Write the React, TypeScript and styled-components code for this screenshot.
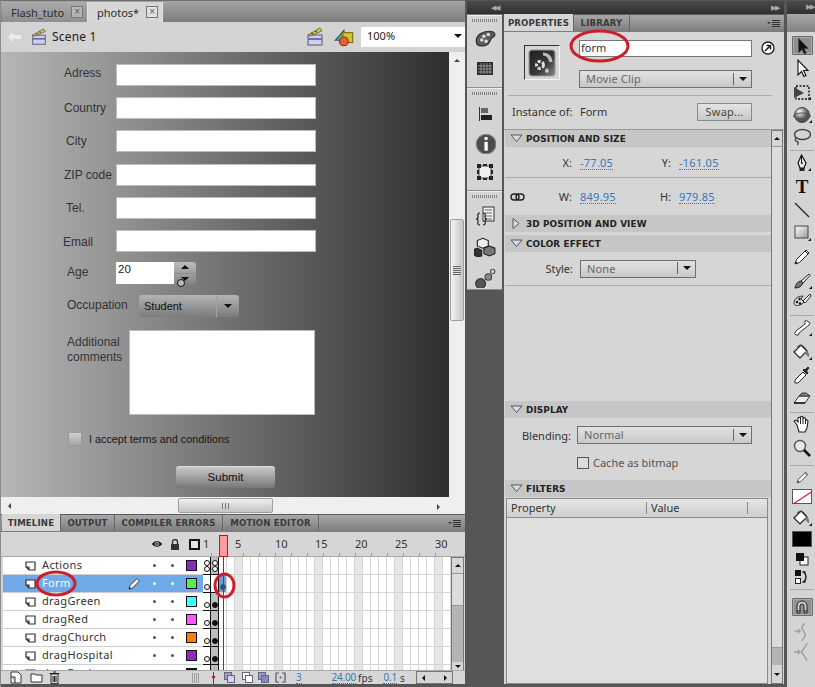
import React from "react";
import styled, { createGlobalStyle } from "styled-components";

const Global = createGlobalStyle`
  html, body { margin: 0; padding: 0; background: #565656; overflow: hidden; }
  * { box-sizing: border-box; }
  svg { display: block; }
`;
const ui = `"Noto Sans", "DejaVu Sans", sans-serif`;
const head = `"DejaVu Sans", sans-serif`;
const arial = `"Liberation Sans", Arial, sans-serif`;

const Screen = styled.div`
  position: relative; width: 815px; height: 687px; display: flex; background: #565656;
  font-family: ${ui}; font-size: 11px; color: #333; overflow: hidden;
`;
const LeftColumn = styled.div`
  width: 465px; height: 687px; display: flex; flex-direction: column;
  border-left: 1px solid #8c8c8c; border-top: 1px solid #6e6e6e; flex: none;
`;
const DocTabs = styled.div`
  height: 21px; display: flex; align-items: flex-end; padding-left: 1px;
  background: linear-gradient(#a4a4a4, #7d7d7d); flex: none;
`;
const DocTab = styled.div<{ $active?: boolean; $w: number }>`
  width: ${(p) => p.$w}px; height: 20px; display: flex; align-items: center; gap: 7px; padding-left: 9px;
  font-size: 11px; color: #2e2e2e;
  background: ${(p) => (p.$active ? "#d6d6d6" : "linear-gradient(#aaa,#909090)")};
  border-right: 1px solid #e4e4e4;
`;
const CloseBox = styled.span`
  width: 12px; height: 12px; border: 1px solid #777; color: #555; font-size: 10px; line-height: 9px; text-align: center;
  background: rgba(255,255,255,.25); font-family: ${arial};
`;
const SceneBar = styled.div`
  height: 30px; flex: none; display: flex; align-items: center; background: #d3d3d3; padding: 0 0 0 7px;
`;
const SceneName = styled.span` margin-left: 4px; padding-bottom: 2px; font-size: 12px; letter-spacing: .2px; color: #222; flex: 1; `;
const ZoomBox = styled.div`
  width: 104px; height: 20px; background: #fff; margin-left: 5px; display: flex; align-items: center; justify-content: space-between;
  padding: 0 3px 3px 6px; font-size: 11px; color: #222;
`;
const StageRow = styled.div` height: 445px; flex: none; display: flex; `;
const Stage = styled.div`
  width: 448px; height: 445px; flex: none; padding-top: 12px; overflow: hidden;
  background: linear-gradient(90deg, #b6b6b6 0%, #2e2e2e 100%);
  font-family: ${arial}; font-size: 12px; color: #333;
`;
const FormRow = styled.div<{ $mt?: number }>` display: flex; height: 22px; margin-top: ${(p) => p.$mt ?? 11}px; `;
const FormLabel = styled.div<{ $x: number; $w?: number; $lift?: number }>`
  width: ${(p) => p.$w ?? 115}px; flex: none; padding-left: ${(p) => p.$x}px; line-height: 22px; color: #333;
  margin-top: ${(p) => -(p.$lift ?? 0)}px;
`;
const TextBox = styled.div<{ $w?: number; $h?: number }>`
  width: ${(p) => p.$w ?? 200}px; height: ${(p) => p.$h ?? 22}px; background: #fff; border: 1px solid #bdbdbd; flex: none;
`;
const AgeBox = styled.div`
  width: 58px; height: 22px; background: #fff; color: #222; padding: 0 0 0 2px; line-height: 15px; font-size: 11.5px;
`;
const Spinner = styled.div`
  width: 22px; height: 22px; border-radius: 0 3px 3px 0; display: flex; flex-direction: column;
  background: linear-gradient(#bcbcbc, #858585); position: relative;
`;
const SpinPart = styled.div<{ $down?: boolean }>`
  flex: 1; display: flex; align-items: center; justify-content: center; font-size: 0;
  border-bottom: ${(p) => (p.$down ? "none" : "1px solid #8f8f8f")};
`;
const Tri = styled.span<{ $dir: "up" | "down" | "left" | "right"; $s?: number; $c?: string }>`
  display: inline-block; width: 0; height: 0; flex: none;
  ${(p) => {
    const s = p.$s ?? 4; const c = p.$c ?? "#111";
    if (p.$dir === "up") return `border-left:${s}px solid transparent;border-right:${s}px solid transparent;border-bottom:${s}px solid ${c};`;
    if (p.$dir === "down") return `border-left:${s}px solid transparent;border-right:${s}px solid transparent;border-top:${s}px solid ${c};`;
    if (p.$dir === "left") return `border-top:${s}px solid transparent;border-bottom:${s}px solid transparent;border-right:${s}px solid ${c};`;
    return `border-top:${s}px solid transparent;border-bottom:${s}px solid transparent;border-left:${s}px solid ${c};`;
  }}
`;
const CursorMark = styled.span`
  position: absolute; left: 3px; top: 17px; width: 8px; height: 8px; border-radius: 50%; background: #bbb; border: 1.5px solid #111;
`;
const OccSelect = styled.div`
  width: 100px; height: 22px; border-radius: 3px; display: flex; align-items: center; font-size: 11px; color: #111;
  background: linear-gradient(#b4b4b4, #7b7b7b); padding-left: 5px; position: relative;
`;
const OccName = styled.span` flex: 1; `;
const OccArrow = styled.span`
  width: 23px; height: 22px; border-left: 1px solid #a2a2a2; display: flex; align-items: center; justify-content: center;
`;
const CommentLabel = styled.div` width: 128px; padding-left: 66px; flex: none; line-height: 15px; padding-top: 5px; color: #333; `;
const CommentRow = styled.div` display: flex; margin-top: 13px; height: 85px; `;
const CheckRow = styled.div` display: flex; align-items: center; gap: 7px; margin: 17px 0 0 67px; height: 14px; color: #151515; font-size: 10.8px; `;
const FormCheck = styled.span` width: 14px; height: 14px; background: linear-gradient(#d0d0d0, #a5a5a5); border: 1px solid #999; `;
const SubmitBtn = styled.div`
  width: 99px; height: 22px; margin: 20px 0 0 175px; border-radius: 3px; background: linear-gradient(#c8c8c8, #777);
  text-align: center; line-height: 21px; font-size: 11.5px; color: #111; border-top: 1px solid #ddd;
`;
const VScroll = styled.div`
  width: 16px; flex: none; background: #efefef; display: flex; flex-direction: column; align-items: center; padding-top: 7px;
`;
const VThumb = styled.div`
  width: 14px; height: 102px; margin-top: 157px; border: 1px solid #9e9e9e; border-radius: 2px;
  background: linear-gradient(90deg, #f2f2f2, #e2e2e2 40%, #c4c4c8); display: flex; align-items: center; justify-content: center;
`;
const GripH = styled.span`
  width: 8px; height: 9px; background: repeating-linear-gradient(#666 0 1px, #ddd 1px 2px);
`;
const GripV = styled.span`
  width: 7px; height: 6px; background: repeating-linear-gradient(90deg, #777 0 1px, transparent 1px 3px);
`;
const GripTall = styled.span`
  display: block; width: 7px; height: 10px; background: repeating-linear-gradient(90deg, #a0a0a0 0 1px, transparent 1px 2px);
`;
const HScroll = styled.div`
  height: 17px; flex: none; background: #efefef; display: flex; align-items: center; padding-left: 7px; position: relative;
`;
const HThumb = styled.div`
  width: 95px; height: 15px; margin-left: 167px; border: 1px solid #9e9e9e; border-radius: 2px;
  background: linear-gradient(#f0f0f0, #c4c4c4); display: flex; align-items: center; justify-content: center;
`;
const HEnd = styled.span` margin-left: 164px; `;
const PanelTabs = styled.div`
  height: 18px; flex: none; display: flex; align-items: flex-end; background: linear-gradient(#a8a8a8, #7e7e7e);
  border-top: 1px solid #5a5a5a; border-bottom: 1px solid #7d7d7d;
`;
const PanelTab = styled.div<{ $active?: boolean; $w: number }>`
  width: ${(p) => p.$w}px; height: 17px; flex: none; text-align: center; line-height: 18px;
  font-family: ${head}; font-weight: 700; font-size: 8.6px; letter-spacing: .15px; color: #3a3a3a;
  background: ${(p) => (p.$active ? "#d6d6d6" : "transparent")}; border-right: 1px solid #666;
`;
const TabSpacer = styled.div` flex: 1; `;
const MenuGlyph = styled.div`
  width: 14px; height: 16px; margin-right: 3px; display: flex; align-items: center; gap: 1px;
`;
const MenuLines = styled.span`
  width: 8px; height: 7px; background: repeating-linear-gradient(#333 0 1px, transparent 1px 2px);
`;
const TimelineBody = styled.div`
  position: relative; flex: none; height: 152px; background: #d6d6d6;
`;
const RulerRow = styled.div` height: 25px; display: flex; padding-left: 2px; border-bottom: 1px solid #a8a8a8; `;
const LayerHeads = styled.div`
  width: 200px; flex: none; position: relative; display: flex; align-items: center; padding-left: 145px;
`;
const HeadCell = styled.div` width: 18px; display: flex; justify-content: center; `;
const OutlineBox = styled.span` width: 11px; height: 11px; border: 2px solid #111; margin-left: 5px; background: #e4e4e4; `;
const Ruler = styled.div` display: flex; width: 248px; `;
const RulerCell = styled.div<{ $tick: boolean }>`
  width: 8px; height: 24px; position: relative; font-size: 11px; color: #333;
  ${(p) => (p.$tick ? "background: linear-gradient(#999,#999) 0 100% / 1px 3px no-repeat;" : "")}
`;
const RulerLabel = styled.span` position: absolute; left: 0; top: 4px; white-space: nowrap; `;
const RowsArea = styled.div` display: flex; height: 113px; padding-left: 2px; overflow: hidden; `;
const LayerCol = styled.div` width: 200px; flex: none; `;
const LayerRow = styled.div<{ $sel?: boolean }>`
  height: 18px; display: flex; align-items: center; padding-left: 22px; overflow: hidden;
  background: ${(p) => (p.$sel ? "#70a9e8" : "#fff")}; border-bottom: 1px solid #cfcfcf;
  color: ${(p) => (p.$sel ? "#fff" : "#333")}; letter-spacing: .35px;
`;
const LayerName = styled.span` width: 85px; margin-left: 6px; flex: none; padding-bottom: 3px; white-space: nowrap; `;
const PencilSlot = styled.span` width: 18px; flex: none; `;
const DotCell = styled.span` width: 18px; flex: none; display: flex; justify-content: center; `;
const Dot = styled.i<{ $light?: boolean }>` width: 3px; height: 3px; border-radius: 50%; background: ${(p) => (p.$light ? "#fff" : "#555")}; `;
const Swatch = styled.span<{ $c: string }>` width: 11px; height: 11px; flex: none; margin-left: 5px; background: ${(p) => p.$c}; border: 1px solid #111; `;
const FrameCol = styled.div` width: 248px; flex: none; `;
const FrameLine = styled.div` display: flex; height: 18px; `;
const Frame = styled.div<{ $bg: string; $edge?: boolean }>`
  width: 8px; height: 18px; position: relative; flex: none; background: ${(p) => p.$bg};
  border-right: 1px solid ${(p) => (p.$edge ? "#111" : "#d4d4d4")};
  border-bottom: 1px solid ${(p) => (p.$edge ? "#111" : "#d4d4d4")};
`;
const KeyMark = styled.i<{ $solid?: boolean; $b?: number; $c?: string }>`
  position: absolute; left: 1px; bottom: ${(p) => p.$b ?? 2}px; width: 6px; height: 6px; border-radius: 50%;
  background: ${(p) => (p.$c ?? (p.$solid ? "#111" : "#fff"))}; border: 1px solid ${(p) => p.$c ?? "#111"};
`;
const TimeScroll = styled.div`
  width: 13px; flex: none; display: flex; flex-direction: column; background: #b4b4b4; border: 1px solid #777; border-bottom: none;
`;
const ScrollArrow = styled.div<{ $h: number }>` height: ${(p) => p.$h}px; display: flex; align-items: center; justify-content: center; flex: none; background: #d6d6d6; `;
const ScrollThumb = styled.div<{ $h: number }>` height: ${(p) => p.$h}px; flex: none; background: #dcdcdc; border-top: 1px solid #999; border-bottom: 1px solid #999; `;
const ScrollFill = styled.div` flex: 1; `;
const Playhead = styled.div`
  position: absolute; left: 218px; top: 3px; width: 9px; height: 22px; background: #ff9c9c; border: 1px solid #c01818;
`;
const PlayLine = styled.div` position: absolute; left: 222px; top: 25px; width: 1px; height: 113px; background: #c01818; `;
const TimeFooter = styled.div`
  height: 14px; display: flex; align-items: center; padding-left: 9px; background: #d6d6d6; font-size: 10px; border-top: 1px solid #a8a8a8;
`;
const FootIcon = styled.span<{ $ml: number }>` margin-left: ${(p) => p.$ml}px; flex: none; `;
const BlueVal = styled.span<{ $ml?: number }>`
  color: #3a76b8; border-bottom: 1px dotted #3a76b8; line-height: 11px; margin-left: ${(p) => p.$ml ?? 0}px; letter-spacing: -.2px;
`;
const FootText = styled.span<{ $ml: number }>` margin-left: ${(p) => p.$ml}px; color: #333; `;
const FootPager = styled.div`
  width: 37px; height: 13px; margin-left: 11px; border: 1px solid #777; display: flex; align-items: center; justify-content: space-between; padding: 0 5px; flex: none;
`;
const Gutter = styled.div` width: 2px; flex: none; `;
const RightArea = styled.div` width: 317px; flex: none; display: flex; flex-direction: column; `;
const CollapseStrip = styled.div`
  height: 13px; margin-top: 1px; flex: none; display: flex; align-items: center; justify-content: space-between; padding: 0 5px 0 24px;
  background: linear-gradient(#4a4a4a, #303030); color: #aaa; font-size: 7px; letter-spacing: -1px; font-family: ${arial};
`;
const RightBody = styled.div` flex: 1; display: flex; `;
const Dock = styled.div` width: 35px; flex: none; height: 276px; background: #d4d4d4; display: flex; flex-direction: column; border-top: 1px solid #777; `;
const DockGroup = styled.div<{ $h: number; $gap: number }>`
  height: ${(p) => p.$h}px; border-bottom: 1px solid #8e8e8e; border-top: 1px solid #eee; flex: none; display: flex; flex-direction: column; align-items: center; gap: ${(p) => p.$gap}px; padding-top: 3px;
`;
const DockGrip = styled.span<{ $mb: number }>`
  width: 26px; height: 3px; background: repeating-linear-gradient(90deg, #888 0 1px, transparent 1px 2px); margin-bottom: ${(p) => p.$mb}px;
`;
const Props = styled.div`
  width: 280px; flex: none; margin-left: 2px; display: flex; flex-direction: column; background: #d6d6d6; height: 670px; font-size: 11px;
`;
const PropHeader = styled.div` height: 97px; flex: none; `;
const SymbolRow = styled.div` display: flex; padding: 8px 0 0 20px; height: 63px; `;
const SymbolBox = styled.div`
  width: 36px; height: 35px; flex: none; display: flex; align-items: center; justify-content: center; margin-top: 5px;
  border-left: 1px solid #333; border-top: 1px solid #333; border-right: 1px solid #f4f4f4; border-bottom: 1px solid #f4f4f4;
`;
const SymbolStack = styled.div` width: 173px; margin-left: 19px; display: flex; flex-direction: column; gap: 13px; `;
const NameInput = styled.div` height: 17px; background: #fff; border: 1px solid #777; padding-left: 1px; line-height: 14px; color: #333; font-size: 11px; `;
const Dropdown = styled.div<{ $w?: number }>`
  ${(p) => (p.$w ? `width:${p.$w}px;` : "")} height: 18px; flex: none; display: flex; align-items: center; justify-content: space-between;
  border: 1px solid #6f6f6f; padding: 0 0 1px 6px; color: #666; letter-spacing: .15px; background: linear-gradient(#e2e2e2, #c8c8c8);
`;
const DropEnd = styled.span` width: 18px; height: 12px; border-left: 1px solid #666; display: flex; align-items: center; justify-content: center; `;
const GoIcon = styled.span` margin: 1px 0 0 9px; `;
const InstanceRow = styled.div`
  display: flex; align-items: center; margin: 0 0 0 4px; width: 264px; border-top: 1px solid #aaa; padding: 0 0 2px 4px; height: 34px; color: #333;
`;
const InstanceLabel = styled.span` width: 68px; `;
const InstanceName = styled.span` flex: 1; `;
const SwapBtn = styled.div`
  width: 55px; height: 18px; margin-right: 20px; border: 1px solid #8a8a8a; background: linear-gradient(#e4e4e4, #c8c8c8); text-align: center; line-height: 15px; color: #444; letter-spacing: .2px;
`;
const PropScrollArea = styled.div` flex: 1; display: flex; min-height: 0; border-top: 1px solid #999; `;
const PropList = styled.div` width: 267px; flex: none; padding: 0 0 0 1px; `;
const SectionHead = styled.div<{ $mt?: number }>`
  height: 17px; margin-top: ${(p) => p.$mt ?? 0}px; background: #c6c6c6; display: flex; align-items: center; padding-left: 5px; gap: 3px;
  font-family: ${head}; font-weight: 700; font-size: 8.9px; letter-spacing: .1px; color: #222;
`;
const PropLine = styled.div<{ $h: number; $line?: boolean }>`
  height: ${(p) => p.$h}px; display: flex; align-items: center; border-bottom: ${(p) => (p.$line ? "1px solid #aaa" : "none")};
`;
const Axis = styled.span<{ $w: number }>` width: ${(p) => p.$w}px; text-align: right; color: #333; flex: none; `;
const AxisVal = styled.span<{ $w: number }>` width: ${(p) => p.$w}px; margin-left: 8px; flex: none; `;
const BlueNum = styled.span` color: #3a76b8; border-bottom: 1px dotted #3a76b8; line-height: 12px; display: inline-block; letter-spacing: .25px; `;
const CheckLine = styled.div` display: flex; align-items: center; gap: 4px; margin: 4px 0 0 72px; height: 13px; color: #555; `;
const SmallCheck = styled.span` width: 12px; height: 12px; border: 1px solid #555; background: #dcdcdc; `;
const FilterTable = styled.div` margin: 1px 0 0 1px; width: 262px; height: 186px; border: 1px solid #8a8a8a; background: #e0e0e0; `;
const FilterHead = styled.div` height: 19px; display: flex; align-items: center; background: linear-gradient(#e6e6e6,#cfcfcf); border-bottom: 1px solid #8a8a8a; padding-left: 4px; color: #333; `;
const FilterCell = styled.span<{ $w: number; $pad?: number }>` width: ${(p) => p.$w}px; flex: none; padding-left: ${(p) => p.$pad ?? 0}px; border-right: 1px solid #8a8a8a; line-height: 12px; `;
const PropScroll = styled.div` width: 12px; flex: none; display: flex; flex-direction: column; border: 1px solid #777; background: #b4b4b4; `;
const GapBar = styled.div` width: 3px; flex: none; `;
const Tools = styled.div`
  width: 30px; flex: none; height: 686px; margin-top: 1px; background: #d4d4d4; display: flex; flex-direction: column; align-items: center;
`;
const ToolsTop = styled.div`
  height: 13px; width: 100%; flex: none; background: linear-gradient(#4a4a4a, #303030); color: #aaa; font-size: 7px; letter-spacing: -1px; text-align: right; padding-right: 3px; line-height: 12px; font-family: ${arial};
`;
const ToolsBar = styled.div` height: 18px; width: 100%; flex: none; margin-bottom: 4px; background: linear-gradient(#a8a8a8, #808080); `;
const ToolBtn = styled.div<{ $on?: boolean; $h?: number }>`
  width: 21px; height: ${(p) => p.$h ?? 23}px; flex: none; display: flex; align-items: center; justify-content: center;
  ${(p) => (p.$on ? "background: #8f8f8f; border: 1px solid #6c6c6c; border-radius: 1px; box-shadow: inset 0 0 0 1px #a9a9a9;" : "")}
`;
const ToolSep = styled.div<{ $t: number; $b?: number }>` width: 24px; height: 1px; background: #a8a8a8; margin: ${(p) => p.$t}px 0 ${(p) => p.$b ?? 0}px; flex: none; `;
const TextTool = styled.span` font-family: "Liberation Serif", serif; font-weight: 700; font-size: 19px; line-height: 20px; color: #111; `;
const ColorBox = styled.div<{ $bg: string; $h: number }>` width: 20px; height: ${(p) => p.$h}px; border: 1px solid #555; background: ${(p) => p.$bg}; flex: none; overflow: hidden; `;
const Ellipse = styled.svg<{ $x: number; $y: number }>` position: absolute; left: ${(p) => p.$x}px; top: ${(p) => p.$y}px; pointer-events: none; overflow: visible; `;

type S = { s?: number };
const Svg = ({ s = 20, children }: S & { children: React.ReactNode }) => (
  <svg width={s} height={s} viewBox="0 0 20 20">{children}</svg>
);
const Clapper = ({ s = 18 }: S) => (
  <Svg s={s}>
    <rect x="3" y="8" width="14" height="10" fill="#cfd0ef" stroke="#55557a" />
    <rect x="3" y="11" width="14" height="2" fill="#6f70a8" />
    <path d="M3 8 L15 1 L17 4 L5 9Z" fill="#d8c830" stroke="#555" strokeWidth=".8" />
    <path d="M6 6 l2 1 M10 4 l2 1" stroke="#333" />
  </Svg>
);
const Shapes = () => (
  <Svg s={22}>
    <path d="M1 13 L9 4 L10 13Z" fill="#3fb89a" stroke="#26614f" />
    <rect x="8" y="6" width="9" height="9" fill="#d4c22e" stroke="#7a6c12" />
    <circle cx="9" cy="14" r="4" fill="#e86030" stroke="#8a3010" />
  </Svg>
);
const DocFold = () => (
  <svg width="11" height="10" viewBox="0 0 11 10"><path d="M1 1 H10 V9 H4 L1 6Z M4 9 V6 H1" fill="#fff" stroke="#333" strokeWidth="1.2" /></svg>
);
const PencilSmall = ({ c = "#333" }: { c?: string }) => (
  <svg width="14" height="14" viewBox="0 0 14 14"><path d="M2 12 L3 8.5 L10 1.5 L12.5 4 L5.5 11Z" fill="#fff" stroke={c} /><path d="M2 12 L3 10.5 L4 11.3Z" fill="#111" /></svg>
);
const Eye = () => <svg width="12" height="8" viewBox="0 0 12 8"><path d="M0.5 4 Q6 -2 11.5 4 Q6 10 0.5 4Z" fill="#222" /><circle cx="6" cy="4" r="2" fill="#bbb" /><circle cx="6" cy="4" r="1" fill="#111" /></svg>;
const Lock = () => <svg width="10" height="11" viewBox="0 0 10 11"><path d="M2.5 5 V3 a2.5 2.5 0 0 1 5 0 V5" fill="none" stroke="#333" strokeWidth="1.4" /><rect x="1" y="5" width="8" height="6" fill="#333" /></svg>;
const NewLayer = () => <svg width="12" height="13" viewBox="0 0 12 13"><path d="M1 1 H8 L11 4 V12 H1Z" fill="#fff" stroke="#333" /><path d="M1 6 H5 V12" fill="#ccc" stroke="#333" /></svg>;
const Folder = () => <svg width="13" height="11" viewBox="0 0 13 11"><path d="M1 2 H5 L6 3 H12 V10 H1Z" fill="#fff" stroke="#333" /></svg>;
const Trash = () => <svg width="11" height="13" viewBox="0 0 11 13"><rect x="2" y="3" width="7" height="9.5" fill="#ddd" stroke="#333" /><path d="M0.5 2.5 H10.5 M4 1 H7 M4 5 V11 M5.5 5 V11 M7 5 V11" stroke="#222" /></svg>;
const OnionMark = () => <svg width="5" height="12" viewBox="0 0 5 12"><path d="M2.5 0 V12" stroke="#c01818" /><path d="M0.5 4 H4.5 L2.5 8Z" fill="#c01818" /></svg>;
const Onion = ({ a, b }: { a: string; b: string }) => <svg width="11" height="11" viewBox="0 0 11 11"><rect x="0.5" y="0.5" width="7" height="7" fill={a} stroke="#667" /><rect x="3.5" y="3.5" width="7" height="7" fill={b} stroke="#667" /></svg>;
const Brackets = () => <svg width="11" height="11" viewBox="0 0 11 11"><path d="M4 1 H1 V10 H4 M7 1 H10 V10 H7" fill="none" stroke="#556" strokeWidth="1.2" /><circle cx="5.5" cy="5.5" r="1" fill="#556" /></svg>;

const PaletteIcon = () => <Svg s={22}><path d="M2 12 C2 6 8 3 14 3 C19 3 20 6 18 8 C15 9 15 11 14 13 C12 17 2 18 2 12Z" fill="#5c5c5c" stroke="#2c2c2c" /><circle cx="7" cy="11" r="1.6" fill="#ddd" /><circle cx="9" cy="7.5" r="1.6" fill="#ddd" /><circle cx="13" cy="6" r="1.6" fill="#ddd" /><circle cx="11" cy="12" r="1.6" fill="#ddd" /></Svg>;
const SwatchGrid = () => <Svg s={20}><rect x="2" y="3" width="16" height="13" fill="#2c2c2c" /><path d="M3 7 H17 M3 10 H17 M3 13 H17 M6 4 V15 M9 4 V15 M12 4 V15 M15 4 V15" stroke="#aaa" strokeWidth=".8" /></Svg>;
const AlignIcon = () => <Svg s={20}><path d="M4.5 3 V17" stroke="#333" /><rect x="6" y="4" width="7" height="5" fill="#666" /><rect x="6" y="11" width="11" height="5" fill="#222" /></Svg>;
const InfoIcon = () => <Svg s={22}><circle cx="11" cy="11" r="9" fill="#4c4c4c" stroke="#888" /><circle cx="11" cy="6" r="1.6" fill="#fff" /><rect x="9.5" y="9" width="3" height="8" fill="#fff" /></Svg>;
const TransformIcon = () => <Svg s={20}><rect x="4" y="4" width="12" height="12" fill="#f0f0f0" stroke="#444" /><path d="M2 2h4v4H2z M14 2h4v4h-4z M2 14h4v4H2z M14 14h4v4h-4z M8 2h4v2H8z M8 16h4v2H8z M2 8h2v4H2z M16 8h2v4h-2z" fill="#222" /></Svg>;
const CodeIcon = () => <svg width="22" height="20" viewBox="0 0 22 20"><rect x="9" y="1" width="11" height="14" fill="#f0f0f0" stroke="#333" /><path d="M11 4 H18 M11 7 H18 M11 10 H18 M11 13 H18" stroke="#666" /><path d="M6 7 Q3 7 4 11 Q4 13 2 13 Q4 13 4 15 Q3 19 6 19 M9 7 Q12 7 11 11 Q11 13 13 13 Q11 13 11 15 Q12 19 9 19" fill="none" stroke="#222" strokeWidth="1.2" /></svg>;
const CubesIcon = () => <Svg s={22}><path d="M8 3 L13 5 V10 L8 12 L3 10 V5Z" fill="#eee" stroke="#222" /><path d="M3 12 L7 14 V19 L3 20 L0 18 V13Z" fill="#333" stroke="#222" /><path d="M14 10 L19 12 V17 L14 19 L9 17 V12Z" fill="#777" stroke="#222" /></Svg>;
const DotsIcon = () => <Svg s={22}><circle cx="6" cy="16" r="4.5" fill="#555" stroke="#333" /><circle cx="13" cy="10" r="3" fill="#888" stroke="#444" /><circle cx="17" cy="5" r="2" fill="#ccc" stroke="#555" /></Svg>;
const MovieClipIcon = () => (
  <svg width="28" height="28" viewBox="0 0 28 28">
    <defs><linearGradient id="mc" x1="0" y1="0" x2="1" y2="1"><stop offset="0" stopColor="#1e1e1e" /><stop offset=".6" stopColor="#3a3a3a" /><stop offset="1" stopColor="#8a8a8a" /></linearGradient></defs>
    <rect x="1" y="1" width="26" height="26" rx="3" fill="url(#mc)" stroke="#9a9a9a" strokeWidth="1.2" />
    <circle cx="12" cy="16" r="3.5" fill="none" stroke="#dedede" strokeWidth="3" strokeDasharray="3 1.6" />
    <path d="M15 3.5 Q24 4 24.5 13 L21 13 Q20.5 7 15 6.5Z" fill="#bcbcbc" />
    <path d="M18 19 l3 2 l-1 3 l-3 -1z" fill="#cfcfcf" />
  </svg>
);
const GoCircle = () => <svg width="14" height="14" viewBox="0 0 14 14"><circle cx="7" cy="7" r="6" fill="#fff" stroke="#222" strokeWidth="1.4" /><path d="M4 10 L9 5 M5.5 4.5 H9.5 V8.5" fill="none" stroke="#222" strokeWidth="1.6" /></svg>;
const Disclose = ({ open }: { open: boolean }) => open
  ? <svg width="13" height="9" viewBox="0 0 13 9"><path d="M1 1 H12 L6.5 7.5Z" fill="#dcdcdc" stroke="#555" /></svg>
  : <svg width="13" height="11" viewBox="0 0 13 11"><path d="M3 0.5 L9 5.5 L3 10.5Z" fill="#dcdcdc" stroke="#555" /></svg>;
const LinkIcon = () => <svg width="15" height="8" viewBox="0 0 15 8"><rect x="1" y="1" width="8" height="6" rx="3" fill="none" stroke="#222" strokeWidth="1.4" /><rect x="6" y="1" width="8" height="6" rx="3" fill="none" stroke="#222" strokeWidth="1.4" /></svg>;

const Arrow = () => <Svg><path d="M6 2 V17 L9.5 13.5 L12 18.5 L14 17.5 L11.5 12.5 L16 12.5Z" fill="#111" stroke="#333" strokeWidth=".6" /></Svg>;
const SubArrow = () => <Svg><path d="M6 2 V17 L9.5 13.5 L12 18.5 L14 17.5 L11.5 12.5 L16 12.5Z" fill="#fff" stroke="#111" strokeWidth="1.1" /></Svg>;
const FreeT = () => <Svg><rect x="4" y="4" width="13" height="13" fill="none" stroke="#111" strokeDasharray="2 1.5" strokeWidth="1.4" /><path d="M2 5 L12 11 L2 16Z" fill="#444" /><path d="M16 18 L19 18 L19 15Z" fill="#111" /></Svg>;
const Sphere = () => <Svg><defs><radialGradient id="sph" cx=".35" cy=".3"><stop offset="0" stopColor="#fff" /><stop offset="1" stopColor="#555" /></radialGradient></defs><circle cx="10" cy="10" r="7.5" fill="url(#sph)" stroke="#444" /><ellipse cx="10" cy="11" rx="8.5" ry="3" fill="none" stroke="#555" /><path d="M17 18 L20 18 L20 15Z" fill="#111" /></Svg>;
const Lasso = () => <Svg><ellipse cx="10.5" cy="7.5" rx="8" ry="5" fill="none" stroke="#444" strokeWidth="1.4" /><path d="M4 11 Q2 14 5 14.5 Q7 15 5.5 18" fill="none" stroke="#444" strokeWidth="1.4" /></Svg>;
const Pen = () => <Svg><path d="M9.5 2 L14 10 L12 15 H8 L6 10Z" fill="#eee" stroke="#111" strokeWidth="1.2" /><path d="M9.5 2 V9" stroke="#111" /><circle cx="9.8" cy="10" r="1" fill="#111" /><rect x="7.5" y="15" width="5" height="3" fill="#222" /><path d="M16 18 L19 18 L19 15Z" fill="#111" /></Svg>;
const LineT = () => <Svg><path d="M3 3 L17 17" stroke="#222" strokeWidth="1.2" /></Svg>;
const RectT = () => <Svg><defs><linearGradient id="rct" x1="0" y1="0" x2="1" y2="1"><stop offset="0" stopColor="#fff" /><stop offset="1" stopColor="#999" /></linearGradient></defs><rect x="3" y="3" width="13" height="12" fill="url(#rct)" stroke="#444" /><path d="M16 18 L19 18 L19 15Z" fill="#111" /></Svg>;
const PencilT = ({ s = 20 }: S) => <Svg s={s}><path d="M3 17 L4.5 12.5 L14 3 L17 6 L7.5 15.5Z" fill="#fff" stroke="#222" /><path d="M13 4 L16 7" stroke="#222" /><path d="M3 17 L4 14.5 L5.5 16Z" fill="#111" /></Svg>;
const BrushT = () => <Svg><path d="M17 3 L9 10 L11 12 L18 4.5Z" fill="#eee" stroke="#222" /><path d="M9 10 Q4 11 3 17 Q9 17 11 12Z" fill="#777" stroke="#222" /><path d="M17 18 L20 18 L20 15Z" fill="#111" /></Svg>;
const DecoT = () => <Svg><path d="M2 12 C2 7 7 5 11 5 L9 8 L12 11 C9 15 2 16 2 12Z" fill="#d6d6d6" stroke="#333" /><circle cx="5" cy="11" r="1.2" fill="#111" /><circle cx="7.5" cy="8" r="1.2" fill="#111" /><circle cx="8" cy="12.5" r="1.2" fill="#111" /><path d="M18 3 L11 10 L13 12 L19 5Z" fill="#fff" stroke="#222" /></Svg>;
const BoneT = () => <Svg><path d="M13 3 Q15 1 16 4 Q19 4 17 7 L7 15 Q7 18 4 17 Q1 16 4 13 L13 6Z" fill="#fff" stroke="#333" /><path d="M17 18 L20 18 L20 15Z" fill="#111" /></Svg>;
const BucketT = () => <Svg><path d="M2 10 L9 3 L15 9 L8 16Z" fill="#fff" stroke="#222" strokeWidth="1.2" /><path d="M5 5 Q10 0 15 9" fill="none" stroke="#333" /><path d="M15 9 Q18 12 17 15 Q14 14 13 10Z" fill="#777" /><path d="M17 18 L20 18 L20 15Z" fill="#111" /></Svg>;
const DropperT = ({ s = 20 }: S) => <Svg s={s}><path d="M3 18 L3 15 L11 7 L14 10 L6 18Z" fill="#fff" stroke="#222" /><path d="M11 5 L15 9 L16 8 L14.5 6 L17 3 L16 2 L13 5 L12 4Z" fill="#222" stroke="#222" /></Svg>;
const EraserT = () => <Svg><path d="M2 15 L7 8 H18 L13 15Z" fill="#eee" stroke="#333" /><path d="M7 8 L18 8 L14 5 H10Z" fill="#888" stroke="#333" /><path d="M2 15 H13" stroke="#111" strokeWidth="1.4" /></Svg>;
const HandT = () => <Svg><path d="M5 11 L2 7 Q3 5.5 5 7 L6 8 V4 Q7.5 2.5 8.5 4 V3 Q10 1.5 11 3 V4 Q13 3 13.5 5 V6 Q15.5 5.5 16 7 L15 14 L13 18 H7 Z" fill="#fff" stroke="#222" strokeWidth="1.1" /><path d="M8.5 4 V10 M11 4 V10 M13.5 6 V10" stroke="#222" /></Svg>;
const ZoomT = () => <Svg><circle cx="8" cy="8" r="5.5" fill="#e6e6e6" stroke="#555" strokeWidth="1.4" /><path d="M12 12 L18 18" stroke="#111" strokeWidth="2.6" /></Svg>;
const DefaultColors = () => <svg width="14" height="14" viewBox="0 0 14 14"><rect x="5" y="5" width="8" height="8" fill="#fff" stroke="#222" /><rect x="1" y="1" width="8" height="8" fill="#111" /></svg>;
const SwapColors = () => <svg width="16" height="16" viewBox="0 0 16 16"><rect x="1" y="1" width="6" height="6" fill="#111" /><rect x="1.5" y="9.5" width="5" height="5" fill="#fff" stroke="#222" /><path d="M10 3 Q14 8 10 13 M8.5 3 H11.5 M8.5 13 H11.5" fill="none" stroke="#111" strokeWidth="1.3" /></svg>;
const Magnet = () => <svg width="16" height="16" viewBox="0 0 16 16"><path d="M3 14 V7 a5 5 0 0 1 10 0 V14 H10 V7 a2 2 0 0 0 -4 0 V14Z" fill="#cfcfcf" stroke="#222" /><path d="M3 12 H6 M10 12 H13" stroke="#222" /></svg>;
const SmoothT = () => <svg width="22" height="22" viewBox="0 0 22 22"><path d="M14 2 Q8 5 12 10 Q16 15 10 20" fill="none" stroke="#a0a0a0" strokeWidth="1.6" /><path d="M2 10 H8 M6 8 L8.5 10 L6 12" fill="none" stroke="#a0a0a0" strokeWidth="1.4" /></svg>;
const StraightT = () => <svg width="22" height="22" viewBox="0 0 22 22"><path d="M16 2 L10 11 L16 20" fill="none" stroke="#a0a0a0" strokeWidth="1.6" /><path d="M2 11 H8 M6 9 L8.5 11 L6 13" fill="none" stroke="#a0a0a0" strokeWidth="1.4" /></svg>;

const layers: { name: string; c: string; sel?: boolean }[] = [
  { name: "Actions", c: "#8a2bc0" }, { name: "Form", c: "#55ee55", sel: true }, { name: "dragGreen", c: "#44ffff" },
  { name: "dragRed", c: "#ff55ff" }, { name: "dragChurch", c: "#ff8000" }, { name: "dragHospital", c: "#8a2bc0" }, { name: "dragBank", c: "#111" },
];
const frames = Array.from({ length: 31 }, (_, i) => i + 1);

const frameBg = (row: number, f: number) => {
  if (f === 2) return row === 1 ? "#fff" : "#bdbdbd";
  if (f === 3 && row === 1) return "#6f9ed6";
  if (f === 1) return "#fff";
  return f % 5 === 0 ? "#e6e6e6" : "#fff";
};

const Ring = ({ x, y, w, h }: { x: number; y: number; w: number; h: number }) => (
  <Ellipse $x={x} $y={y} width={w} height={h} viewBox={`0 0 ${w} ${h}`}>
    <ellipse cx={w / 2} cy={h / 2} rx={w / 2 - 2} ry={h / 2 - 2} fill="none" stroke="#cc1f2d" strokeWidth="3" />
  </Ellipse>
);

const Field = ({ label, x, lift, mt }: { label: string; x: number; lift: number; mt?: number }) => (
  <FormRow $mt={mt}>
    <FormLabel $x={x} $lift={lift}>{label}</FormLabel>
    <TextBox />
  </FormRow>
);

export default function App() {
  return (
    <Screen>
      <Global />
      <LeftColumn>
        <DocTabs>
          <DocTab $w={86}>Flash_tuto<CloseBox>×</CloseBox></DocTab>
          <DocTab $w={75} $active>photos*<CloseBox>×</CloseBox></DocTab>
        </DocTabs>
        <SceneBar>
          <Tri $dir="left" $s={5} $c="#ececec" />
          <svg width="8" height="4"><rect width="8" height="4" fill="#ececec" /></svg>
          <FootIcon $ml={9}><Clapper /></FootIcon>
          <SceneName>Scene 1</SceneName>
          <Clapper s={20} />
          <FootIcon $ml={9}><Shapes /></FootIcon>
          <ZoomBox>100%<Tri $dir="down" $s={4} /></ZoomBox>
        </SceneBar>
        <StageRow>
          <Stage>
            <Field label="Adress" x={63} lift={2} mt={0} />
            <Field label="Country" x={63} lift={0} />
            <Field label="City" x={65} lift={0} />
            <Field label="ZIP code" x={63} lift={0} mt={12} />
            <Field label="Tel." x={65} lift={0} />
            <Field label="Email" x={62} lift={-1} />
            <FormRow $mt={10}>
              <FormLabel $x={66} $w={115} $lift={1}>Age</FormLabel>
              <AgeBox>20</AgeBox>
              <Spinner>
                <SpinPart><Tri $dir="up" /></SpinPart>
                <SpinPart $down><Tri $dir="down" /></SpinPart>
                <CursorMark />
              </Spinner>
            </FormRow>
            <FormRow>
              <FormLabel $x={66} $w={138} $lift={1}>Occupation</FormLabel>
              <OccSelect><OccName>Student</OccName><OccArrow><Tri $dir="down" /></OccArrow></OccSelect>
            </FormRow>
            <CommentRow>
              <CommentLabel>Additional<br />comments</CommentLabel>
              <TextBox $w={186} $h={85} />
            </CommentRow>
            <CheckRow><FormCheck />I accept terms and conditions</CheckRow>
            <SubmitBtn>Submit</SubmitBtn>
          </Stage>
          <VScroll>
            <Tri $dir="up" $s={3} $c="#444" />
            <VThumb><GripH /></VThumb>
          </VScroll>
        </StageRow>
        <HScroll>
          <Tri $dir="left" $s={3} $c="#444" />
          <HThumb><GripV /></HThumb>
          <HEnd><Tri $dir="right" $s={3} $c="#444" /></HEnd>
        </HScroll>
        <PanelTabs>
          <FootIcon $ml={1} />
          <PanelTab $w={59} $active>TIMELINE</PanelTab>
          <PanelTab $w={54}>OUTPUT</PanelTab>
          <PanelTab $w={108}>COMPILER ERRORS</PanelTab>
          <PanelTab $w={96}>MOTION EDITOR</PanelTab>
          <TabSpacer />
          <MenuGlyph><Tri $dir="down" $s={2} $c="#333" /><MenuLines /></MenuGlyph>
        </PanelTabs>
        <TimelineBody>
          <RulerRow>
            <LayerHeads>
              <HeadCell><Eye /></HeadCell>
              <HeadCell><Lock /></HeadCell>
              <OutlineBox />
            </LayerHeads>
            <Ruler>
              {frames.map((f) => (
                <RulerCell key={f} $tick={f % 2 === 0}>
                  {(f === 1 || f % 5 === 0) && <RulerLabel>{f}</RulerLabel>}
                </RulerCell>
              ))}
            </Ruler>
          </RulerRow>
          <RowsArea>
            <LayerCol>
              {layers.map((l) => (
                <LayerRow key={l.name} $sel={l.sel}>
                  <DocFold />
                  <LayerName>{l.name}</LayerName>
                  <PencilSlot>{l.sel && <PencilSmall />}</PencilSlot>
                  <DotCell><Dot $light={l.sel} /></DotCell>
                  <DotCell><Dot $light={l.sel} /></DotCell>
                  <Swatch $c={l.c} />
                </LayerRow>
              ))}
            </LayerCol>
            <FrameCol>
              {layers.map((l, r) => (
                <FrameLine key={l.name}>
                  {frames.map((f) => (
                    <Frame key={f} $bg={frameBg(r, f)} $edge={f <= 2}>
                      {r === 0 && f <= 2 && <><KeyMark $b={8} /><KeyMark $b={2} /></>}
                      {r > 0 && f === 1 && <KeyMark />}
                      {r > 1 && f === 2 && <KeyMark $solid />}
                      {r === 1 && f === 3 && <KeyMark $c="#35507a" />}
                    </Frame>
                  ))}
                </FrameLine>
              ))}
            </FrameCol>
            <TimeScroll>
              <ScrollArrow $h={15}><Tri $dir="up" $s={3} /></ScrollArrow>
              <ScrollThumb $h={33} />
              <ScrollFill />
              <ScrollArrow $h={8}><Tri $dir="down" $s={3} /></ScrollArrow>
            </TimeScroll>
          </RowsArea>
          <TimeFooter>
            <NewLayer />
            <FootIcon $ml={8}><Folder /></FootIcon>
            <FootIcon $ml={6}><Trash /></FootIcon>
            <FootIcon $ml={132}><GripTall /></FootIcon>
            <FootIcon $ml={12}><OnionMark /></FootIcon>
            <FootIcon $ml={8}><Onion a="#9d9dd0" b="#d5d5ee" /></FootIcon>
            <FootIcon $ml={7}><Onion a="#fff" b="#fff" /></FootIcon>
            <FootIcon $ml={5}><Onion a="#9d9dd0" b="#8888c4" /></FootIcon>
            <FootIcon $ml={6}><Brackets /></FootIcon>
            <BlueVal $ml={10}>3</BlueVal>
            <BlueVal $ml={30}>24.00</BlueVal>
            <FootText $ml={2}>fps</FootText>
            <BlueVal $ml={11}>0.1</BlueVal>
            <FootText $ml={3}>s</FootText>
            <FootPager><Tri $dir="left" $s={3} /><Tri $dir="right" $s={3} /></FootPager>
          </TimeFooter>
          <Playhead />
          <PlayLine />
        </TimelineBody>
      </LeftColumn>
      <Gutter />
      <RightArea>
        <CollapseStrip><span>◀◀</span><span>▶▶</span></CollapseStrip>
        <RightBody>
          <Dock>
            <DockGroup $h={73} $gap={9}><DockGrip $mb={-3} /><PaletteIcon /><SwatchGrid /></DockGroup>
            <DockGroup $h={103} $gap={8}><DockGrip $mb={1} /><AlignIcon /><InfoIcon /><TransformIcon /></DockGroup>
            <DockGroup $h={99} $gap={9}><DockGrip $mb={-1} /><CodeIcon /><CubesIcon /><DotsIcon /></DockGroup>
          </Dock>
          <Props>
            <PanelTabs>
              <PanelTab $w={70} $active>PROPERTIES</PanelTab>
              <PanelTab $w={56}>LIBRARY</PanelTab>
              <TabSpacer />
              <MenuGlyph><Tri $dir="down" $s={2} $c="#333" /><MenuLines /></MenuGlyph>
            </PanelTabs>
            <PropHeader>
              <SymbolRow>
                <SymbolBox><MovieClipIcon /></SymbolBox>
                <SymbolStack>
                  <NameInput>form</NameInput>
                  <Dropdown>Movie Clip<DropEnd><Tri $dir="down" /></DropEnd></Dropdown>
                </SymbolStack>
                <GoIcon><GoCircle /></GoIcon>
              </SymbolRow>
              <InstanceRow>
                <InstanceLabel>Instance of:</InstanceLabel>
                <InstanceName>Form</InstanceName>
                <SwapBtn>Swap...</SwapBtn>
              </InstanceRow>
            </PropHeader>
            <PropScrollArea>
              <PropList>
                <SectionHead><Disclose open />POSITION AND SIZE</SectionHead>
                <PropLine $h={31} $line>
                  <Axis $w={67}>X:</Axis><AxisVal $w={81}><BlueNum>-77.05</BlueNum></AxisVal>
                  <Axis $w={10}>Y:</Axis><AxisVal $w={50}><BlueNum>-161.05</BlueNum></AxisVal>
                </PropLine>
                <PropLine $h={37}>
                  <FootIcon $ml={5}><LinkIcon /></FootIcon>
                  <Axis $w={47}>W:</Axis><AxisVal $w={80}><BlueNum>849.95</BlueNum></AxisVal>
                  <Axis $w={11}>H:</Axis><AxisVal $w={50}><BlueNum>979.85</BlueNum></AxisVal>
                </PropLine>
                <SectionHead><Disclose open={false} />3D POSITION AND VIEW</SectionHead>
                <SectionHead $mt={3}><Disclose open />COLOR EFFECT</SectionHead>
                <PropLine $h={34} $line>
                  <Axis $w={68}>Style:</Axis>
                  <FootIcon $ml={7}><Dropdown $w={116}>None<DropEnd><Tri $dir="down" /></DropEnd></Dropdown></FootIcon>
                </PropLine>
                <SectionHead $mt={115}><Disclose open />DISPLAY</SectionHead>
                <PropLine $h={34}>
                  <Axis $w={66}>Blending:</Axis>
                  <FootIcon $ml={6}><Dropdown $w={175}>Normal<DropEnd><Tri $dir="down" /></DropEnd></Dropdown></FootIcon>
                </PropLine>
                <CheckLine><SmallCheck />Cache as bitmap</CheckLine>
                <SectionHead $mt={11}><Disclose open />FILTERS</SectionHead>
                <FilterTable>
                  <FilterHead>
                    <FilterCell $w={136}>Property</FilterCell>
                    <FilterCell $w={101} $pad={4}>Value</FilterCell>
                  </FilterHead>
                </FilterTable>
              </PropList>
              <PropScroll>
                <ScrollArrow $h={15}><Tri $dir="up" $s={3} /></ScrollArrow>
                <ScrollThumb $h={502} />
                <ScrollFill />
                <ScrollArrow $h={18}><Tri $dir="down" $s={3} /></ScrollArrow>
              </PropScroll>
            </PropScrollArea>
          </Props>
        </RightBody>
      </RightArea>
      <GapBar />
      <Tools>
        <ToolsTop>▶▶</ToolsTop>
        <ToolsBar />
        <ToolBtn $on $h={19}><Arrow /></ToolBtn>
        <ToolBtn $h={25}><SubArrow /></ToolBtn>
        <ToolBtn><FreeT /></ToolBtn>
        <ToolBtn><Sphere /></ToolBtn>
        <ToolBtn $h={21}><Lasso /></ToolBtn>
        <ToolSep $t={3} />
        <ToolBtn $h={24}><Pen /></ToolBtn>
        <ToolBtn><TextTool>T</TextTool></ToolBtn>
        <ToolBtn><LineT /></ToolBtn>
        <ToolBtn><RectT /></ToolBtn>
        <ToolBtn $h={26}><PencilT /></ToolBtn>
        <ToolBtn $h={22}><BrushT /></ToolBtn>
        <ToolBtn $h={18}><DecoT /></ToolBtn>
        <ToolSep $t={5} />
        <ToolBtn $h={24}><BoneT /></ToolBtn>
        <ToolBtn $h={24}><BucketT /></ToolBtn>
        <ToolBtn $h={22}><DropperT /></ToolBtn>
        <ToolBtn $h={24}><EraserT /></ToolBtn>
        <ToolSep $t={2} />
        <ToolBtn $h={22}><HandT /></ToolBtn>
        <ToolBtn $h={26}><ZoomT /></ToolBtn>
        <ToolSep $t={4} />
        <ToolBtn $h={23}><PencilT s={15} /></ToolBtn>
        <ColorBox $bg="#fff" $h={15}>
          <svg width="20" height="15"><path d="M0 14 L20 1" stroke="#e02030" strokeWidth="1.2" /></svg>
        </ColorBox>
        <ToolBtn $h={27}><BucketT /></ToolBtn>
        <ColorBox $bg="#000" $h={16} />
        <ToolBtn $h={24}><DefaultColors /></ToolBtn>
        <ToolBtn $h={12}><SwapColors /></ToolBtn>
        <ToolSep $t={6} $b={8} />
        <ToolBtn $on $h={18}><Magnet /></ToolBtn>
        <ToolBtn $h={32}><SmoothT /></ToolBtn>
        <ToolBtn $h={8}><StraightT /></ToolBtn>
      </Tools>
      <Ring x={35} y={570} w={42} h={27} />
      <Ring x={213} y={572} w={23} h={27} />
      <Ring x={569} y={29} w={61} h={34} />
    </Screen>
  );
}
